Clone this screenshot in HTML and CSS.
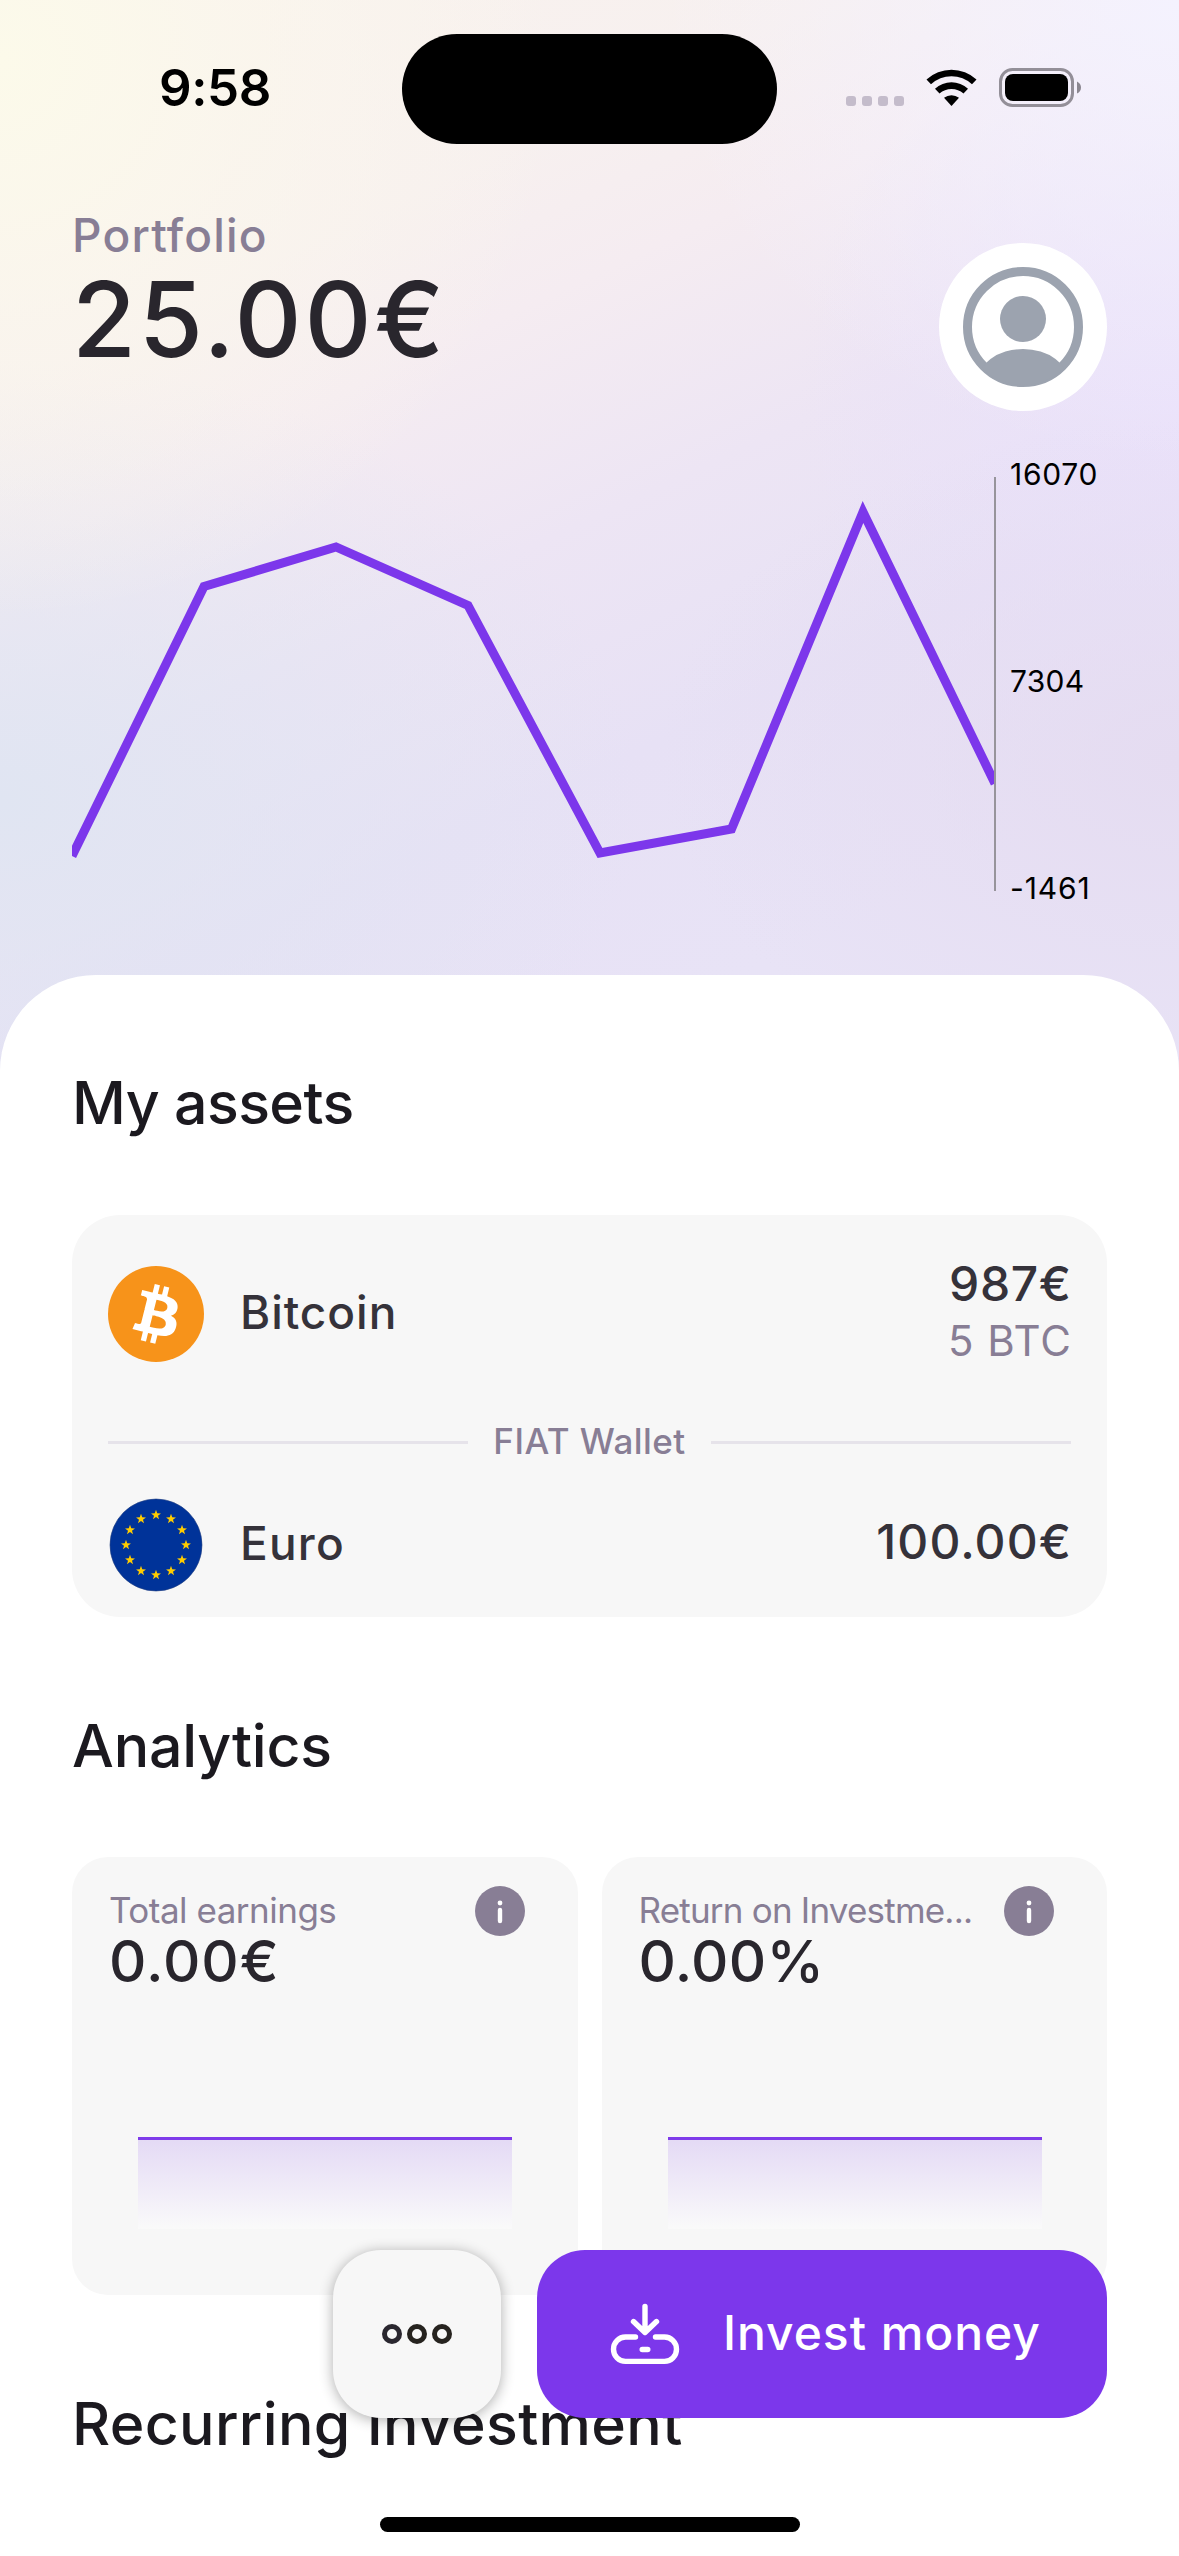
FILE: index.html
```html
<!DOCTYPE html>
<html lang="en">
<head>
<meta charset="utf-8">
<title>Portfolio</title>
<link rel="stylesheet" href="styles.css">
</head>
<body>
<div class="screen">
  <div class="status">
    <div class="time"><span class="t-time">9:58</span></div>
    <div class="island"></div>
    <svg class="status-icons" width="246" height="42" viewBox="0 0 246 42">
      <g fill="#c4bccb"><rect x="6" y="28" width="10" height="10" rx="3"/><rect x="22" y="28" width="10" height="10" rx="3"/><rect x="38" y="28" width="10" height="10" rx="3"/><rect x="54" y="28" width="10" height="10" rx="3"/></g>
      <path d="M86.500 11.500A37 37 0 0 1 136.500 11.500L132 16.300A30 30 0 0 0 91 16.300Z"/>
      <path d="M95 20.700A24.500 24.500 0 0 1 128 20.700L123.500 25.500A18 18 0 0 0 99.500 25.500Z"/>
      <path d="M104 29.800A12.500 12.500 0 0 1 119 29.800L111.500 38Z"/>
      <rect x="160.500" y="1.500" width="72" height="36" rx="12" fill="none" stroke="#938f98" stroke-width="3"/>
      <rect x="165" y="6" width="63" height="27" rx="8"/>
      <path d="M237 13.500q4 2 4 6t-4 6z" fill="#8b8790"/>
    </svg>
  </div>

  <header class="hero">
    <div>
      <div class="label"><span class="t-portfolio">Portfolio</span></div>
      <div class="total"><span class="t-total">25.00€</span></div>
    </div>
    <div class="avatar">
      <svg width="120" height="120" viewBox="0 0 120 120">
        <defs><clipPath id="face"><circle cx="60" cy="60" r="58"/></clipPath></defs>
        <circle cx="60" cy="60" r="55.500" fill="none" stroke="#9ca3af" stroke-width="9"/>
        <circle cx="60" cy="52" r="23" fill="#9ca3af"/>
        <ellipse cx="60" cy="116" rx="46" ry="34" fill="#9ca3af" clip-path="url(#face)"/>
      </svg>
    </div>
  </header>

  <section class="chart">
    <svg width="926" height="420" viewBox="0 0 926 420">
      <defs><clipPath id="plot"><rect x="0" y="0" width="923" height="420"/></clipPath></defs>
      <polyline clip-path="url(#plot)" points="0,383 132,113.500 264,74 396,132.500 528,380 659.500,356 791,39 923,310.500" fill="none" stroke="#7c37eb" stroke-width="9"/>
      <line x1="923" y1="4" x2="923" y2="418" stroke="#97949b" stroke-width="2"/>
    </svg>
    <div class="axis"><span class="t-a1">16070</span><span class="t-a2">7304</span><span class="t-a3">-1461</span></div>
  </section>

  <main class="sheet">
    <h2><span class="t-assets">My assets</span></h2>
    <div class="card assets">
      <div class="row btc">
        <svg class="coin" width="96" height="96" viewBox="0 0 32 32"><circle cx="16" cy="16" r="16" fill="#f7931a"/><path fill="#fff" d="M23.189 14.020c.314-2.096-1.283-3.223-3.465-3.975l.708-2.840-1.728-.430-.690 2.765c-.454-.114-.920-.220-1.385-.326l.695-2.783L15.596 6l-.708 2.839c-.376-.086-.746-.170-1.104-.260l.002-.009-2.384-.595-.460 1.846s1.283.294 1.256.312c.700.175.826.638.805 1.006l-.806 3.235c.048.012.110.030.180.057l-.183-.045-1.130 4.532c-.086.212-.303.531-.793.410.018.025-1.256-.313-1.256-.313l-.858 1.978 2.250.561c.418.105.828.215 1.231.318l-.715 2.872 1.727.430.708-2.840c.472.127.930.245 1.378.357l-.706 2.828 1.728.430.715-2.866c2.948.558 5.164.333 6.097-2.333.752-2.146-.037-3.385-1.588-4.192 1.130-.260 1.980-1.003 2.207-2.538zm-3.950 5.538c-.533 2.147-4.148.986-5.320.695l.950-3.805c1.172.293 4.929.872 4.370 3.110zm.535-5.569c-.487 1.953-3.495.960-4.470.717l.860-3.450c.975.243 4.118.696 3.610 2.733z"/></svg>
        <div class="name"><span class="t-btc">Bitcoin</span></div>
        <div class="amounts"><div class="amount"><span class="t-987">987€</span></div><div class="sub"><span class="t-5btc">5 BTC</span></div></div>
      </div>
      <div class="divider"><i></i><span class="t-fiat">FIAT Wallet</span><i></i></div>
      <div class="row eur">
        <svg class="coin" width="96" height="96" viewBox="-48 -48 96 96">
          <defs><path id="star" fill="#fc0" d="M0-5.200 1.230-1.690 4.950-1.610 1.990.650 3.060 4.210 0 2.090-3.060 4.210-1.990.650-4.950-1.610-1.230-1.690Z"/></defs>
          <circle r="46" fill="#039" stroke="#1f3c80" stroke-width=".6"/>
          <use href="#star" y="-30"/><use href="#star" x="15" y="-26"/><use href="#star" x="26" y="-15"/><use href="#star" x="30"/><use href="#star" x="26" y="15"/><use href="#star" x="15" y="26"/><use href="#star" y="30"/><use href="#star" x="-15" y="26"/><use href="#star" x="-26" y="15"/><use href="#star" x="-30"/><use href="#star" x="-26" y="-15"/><use href="#star" x="-15" y="-26"/>
        </svg>
        <div class="name"><span class="t-eur">Euro</span></div>
        <div class="amount"><span class="t-100">100.00€</span></div>
      </div>
    </div>

    <h2 class="h-analytics"><span class="t-analytics">Analytics</span></h2>
    <div class="stats">
      <div class="card stat">
        <div class="stat-head"><span class="t-earn">Total earnings</span>
          <svg width="50" height="50" viewBox="0 0 50 50"><circle cx="25" cy="25" r="25" fill="#887e95"/><circle cx="25" cy="17" r="2.400" fill="#fff"/><path d="M25 24v11" stroke="#fff" stroke-width="4.400" stroke-linecap="round"/></svg></div>
        <div class="value"><span class="t-v1">0.00€</span></div>
        <div class="spark"></div>
      </div>
      <div class="card stat">
        <div class="stat-head"><span class="t-roi">Return on Investme...</span>
          <svg width="50" height="50" viewBox="0 0 50 50"><circle cx="25" cy="25" r="25" fill="#887e95"/><circle cx="25" cy="17" r="2.400" fill="#fff"/><path d="M25 24v11" stroke="#fff" stroke-width="4.400" stroke-linecap="round"/></svg></div>
        <div class="value"><span class="t-v2">0.00%</span></div>
        <div class="spark"></div>
      </div>
    </div>
    <h2 class="h-recurring"><span class="t-rec">Recurring Investment</span></h2>
  </main>

  <div class="actions">
    <div class="more">
      <svg width="72" height="22" viewBox="0 0 72 22" fill="none" stroke="#26231f" stroke-width="5"><circle cx="11" cy="11" r="7.500" stroke="#2a272f"/><circle cx="36" cy="11" r="7.500"/><circle cx="61" cy="11" r="7.500"/></svg>
    </div>
    <div class="invest">
      <svg width="72" height="64" viewBox="0 0 72 64" fill="none" stroke="#fff" stroke-width="5.400" stroke-linecap="round" stroke-linejoin="round"><path d="M36 4.500v25.500M24.500 19.500 36 30.500 47.500 19.500M26.500 35H16.500a12 12.200 0 0 0 0 24.400H55.500a12 12.200 0 0 0 0-24.400H46.500M33.200 47.500h5.600"/></svg>
      <span class="t-invest">Invest money</span>
    </div>
  </div>
  <div class="home"></div>
</div>
</body>
</html>
```
FILE: styles.css
```css
* { box-sizing: border-box; }
body { margin: 0; font-family: Inter, "Liberation Sans", sans-serif; color: #1b191f; }
.screen {
  position: relative; width: 1179px; height: 2556px; overflow: hidden;
  display: flex; flex-direction: column;
  background:
    radial-gradient(circle 560px at 0 60px, #fcfaea 0%, #fbf7ecb0 45%, #fbf5ea00 100%),
    radial-gradient(ellipse 520px 460px at 1179px 0, #f4f2fe 0%, #f4f2fe00 100%),
    radial-gradient(ellipse 640px 440px at 0 800px, #e0e5f2 0%, #e0e5f200 100%),
    radial-gradient(ellipse 520px 340px at 1179px 760px, #e5dcf1 0%, #e5dcf100 100%),
    radial-gradient(ellipse 380px 420px at 1179px 400px, #eae1fa 0%, #eae1fa00 100%),
    linear-gradient(155deg, #f9f3ee 0, #f7f0ef 350px, #f5ecf1 500px, #ede5f4 720px, #e7e1f5 950px, #e8e3f6 1200px);
}
span { white-space: nowrap; }
.status { height: 177px; flex: none; display: flex; padding-top: 34px; }
.time { width: 402px; padding-left: 159px; padding-top: 23px; font-size: 51px; line-height: 62px; font-weight: 600; color: #000; letter-spacing: -.4px; }
.island { width: 375px; height: 110px; border-radius: 55px; background: #000; }
.status-icons { margin: 34px 0 0 63px; }
.hero { height: 296px; flex: none; display: flex; justify-content: space-between; padding: 0 72px; }
.label { margin-top: 29px; font-size: 46px; line-height: 58px; color: #887e95; letter-spacing: 1.2px; font-weight: 450; }
.total { font-size: 104px; line-height: 110px; font-weight: 550; color: #29262d; letter-spacing: 2.7px; }
.avatar { width: 168px; height: 168px; margin-top: 66px; border-radius: 50%; background: #fff; display: grid; place-items: center; }
.chart { height: 502px; flex: none; display: flex; padding-left: 72px; }
.axis { display: flex; flex-direction: column; justify-content: space-between; height: 450px; margin: -17px 0 0 12px; font-size: 30px; line-height: 36px; color: #000; letter-spacing: .7px; }
.t-a2 { letter-spacing: .3px; }
.t-a3 { letter-spacing: .9px; }
.sheet { flex: 1; background: #fff; border-radius: 96px 96px 0 0; padding: 0 72px; }
h2 { margin: 0; padding-top: 92px; font-size: 59px; line-height: 72px; font-weight: 500; }
.t-assets { letter-spacing: -.6px; }
.t-analytics { letter-spacing: -.2px; }
.t-rec { letter-spacing: .33px; }
.card { background: #f7f7f7; border-radius: 48px; }
.assets { margin-top: 76px; height: 402px; padding: 0 36px; }
.row { display: flex; color: #35323a; }
.btc { padding-top: 51px; height: 191px; }
.name { margin: -2px 0 0 36px; font-size: 46px; line-height: 96px; font-weight: 500; flex: 1; }
.t-btc { letter-spacing: .95px; }
.t-eur { letter-spacing: 1.2px; }
.amounts { text-align: right; margin-top: -10px; }
.amount { font-size: 48px; line-height: 56px; font-weight: 500; text-align: right; }
.t-987 { letter-spacing: .6px; margin-right: -.6px; }
.t-100 { letter-spacing: 1.1px; margin-right: -1.1px; }
.sub { font-size: 42px; line-height: 58px; color: #887e95; }
.t-5btc { letter-spacing: 1px; margin-right: -1px; }
.divider { display: flex; align-items: center; justify-content: space-between; height: 72px; font-size: 35px; font-weight: 500; color: #887e95; }
.divider i { width: 360px; height: 3px; background: #e6e3ea; }
.t-fiat { letter-spacing: .45px; margin-top: -3px; }
.eur { padding-top: 19px; }
.eur .amount { line-height: 96px; margin-top: -3px; }
.h-analytics { padding-top: 93px; }
.stats { display: flex; gap: 24px; margin-top: 75px; }
.stat { width: 505.5px; height: 438px; border-radius: 36px; padding: 29px 37px; }
.stat-head { display: flex; justify-content: space-between; align-items: center; height: 50px; padding-right: 16px; font-size: 35px; color: #887e95; }
.stat-head span { margin-top: -3px; }
.t-earn { letter-spacing: -.5px; }
.t-roi { letter-spacing: -.8px; }
.value { font-size: 58px; line-height: 72px; font-weight: 500; color: #29262d; margin-top: -11px; }
.t-v1 { letter-spacing: 1px; }
.t-v2 { letter-spacing: .3px; }
.spark { height: 92px; width: 374px; margin: 140px 0 0 29px; border-top: 3px solid #7f3cea; background: linear-gradient(#e4daf5, #fafafa); }
.h-recurring { padding-top: 93px; }
.actions { position: absolute; left: 333px; top: 2250px; display: flex; gap: 36px; }
.more, .invest { height: 168px; border-radius: 48px; display: flex; align-items: center; justify-content: center; }
.more { width: 168px; background: #f7f7f7; box-shadow: 0 2px 14px rgba(0,0,0,.32); }
.invest { width: 570px; background: #7c37eb; color: #fff; font-size: 48px; font-weight: 500; justify-content: flex-start; padding-left: 72px; }
.invest span { margin: -3px 0 0 42px; letter-spacing: .95px; }
.home { position: absolute; left: 380px; top: 2517px; width: 420px; height: 15px; border-radius: 8px; background: #000; }
```
